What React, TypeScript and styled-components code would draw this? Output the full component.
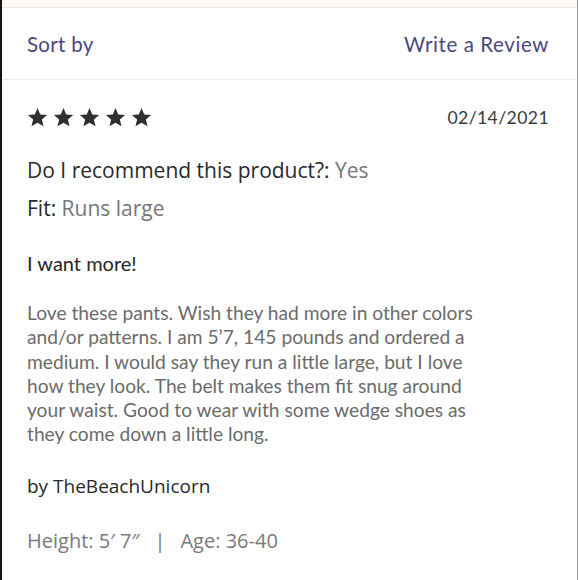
import React from "react";
import styled, { createGlobalStyle } from "styled-components";

const Global = createGlobalStyle`
  html, body { margin: 0; padding: 0; background: #ffffff; }
  * { box-sizing: border-box; }
`;

const Page = styled.div`
  width: 580px;
  height: 580px;
  background: #ffffff;
  padding-right: 2px;
  overflow: hidden;
`;

const Panel = styled.div`
  height: 100%;
  border-left: 2px solid #151515;
  border-right: 1px solid #9a9a9a;
  display: flex;
  flex-direction: column;
`;

const TopStrip = styled.div`
  height: 8px;
  background: #fcf8f4;
  border-bottom: 1px solid #ebe7e3;
`;

const Header = styled.div`
  height: 72px;
  display: flex;
  align-items: center;
  justify-content: space-between;
  padding: 0 28px 0 25px;
  border-bottom: 1px solid #ececec;
  font-family: Lato, "Liberation Sans", sans-serif;
  font-size: 20.5px;
  color: #4b4780;
`;

const HeaderLink = styled.span<{ $spacing: number }>`
  letter-spacing: ${(p) => p.$spacing}px;
`;

const Review = styled.div`
  padding: 24px 28px 0 25px;
  display: flex;
  flex-direction: column;
`;

const TopRow = styled.div`
  display: flex;
  justify-content: space-between;
  align-items: center;
  height: 26px;
`;

const Stars = styled.div`
  display: flex;
  gap: 5px;
`;

const DateText = styled.span`
  font-family: Lato, "Liberation Sans", sans-serif;
  font-size: 17.6px;
  color: #3a3a3a;
  letter-spacing: 0.4px;
`;

const Attr = styled.div<{ $mt: number; $size: number }>`
  margin-top: ${(p) => p.$mt}px;
  font-family: "Open Sans", "Noto Sans", sans-serif;
  font-size: ${(p) => p.$size}px;
  line-height: 24px;
  color: #2a2a2a;
`;

const Value = styled.span`
  color: #777777;
`;

const Title = styled.div`
  margin-top: 31px;
  font-family: Lato, "Liberation Sans", sans-serif;
  font-size: 20px;
  line-height: 24px;
  color: #262626;
`;

const Body = styled.p`
  margin: 26px 0 0;
  max-width: 464px;
  font-family: Lato, "Liberation Sans", sans-serif;
  font-size: 19.2px;
  line-height: 24.3px;
  color: #6b6b6b;
`;

const Meta = styled.div`
  margin-top: 31px;
  font-family: "Open Sans", "Noto Sans", sans-serif;
  font-size: 20px;
  line-height: 24px;
  color: #7a7a7a;
  display: flex;
  gap: 15px;
`;

const Star = () => (
  <svg width="21" height="21" viewBox="0 0 24 24">
    <path
      d="M12 1.2l3.1 7.3 7.9.6-6 5.2 1.9 7.7L12 17.9 5.1 22l1.9-7.7-6-5.2 7.9-.6z"
      fill="#2f2f2f"
    />
  </svg>
);

export default function App() {
  return (
    <Page>
      <Global />
      <Panel>
        <TopStrip />
        <Header>
          <HeaderLink $spacing={0.3}>Sort by</HeaderLink>
          <HeaderLink $spacing={0.6}>Write a Review</HeaderLink>
        </Header>
        <Review>
          <TopRow>
            <Stars>
              {[0, 1, 2, 3, 4].map((i) => (
                <Star key={i} />
              ))}
            </Stars>
            <DateText>02/14/2021</DateText>
          </TopRow>
          <Attr $mt={28} $size={21}>
            Do I recommend this product?: <Value>Yes</Value>
          </Attr>
          <Attr $mt={14} $size={21}>
            Fit: <Value>Runs large</Value>
          </Attr>
          <Title>I want more!</Title>
          <Body>
            Love these pants. Wish they had more in other colors and/or patterns. I am 5’7, 145
            pounds and ordered a medium. I would say they run a little large, but I love how they
            look. The belt makes them fit snug around your waist. Good to wear with some wedge
            shoes as they come down a little long.
          </Body>
          <Attr $mt={27} $size={19}>
            by TheBeachUnicorn
          </Attr>
          <Meta>
            <span>Height: 5′ 7″</span>
            <span>|</span>
            <span>Age: 36-40</span>
          </Meta>
        </Review>
      </Panel>
    </Page>
  );
}
